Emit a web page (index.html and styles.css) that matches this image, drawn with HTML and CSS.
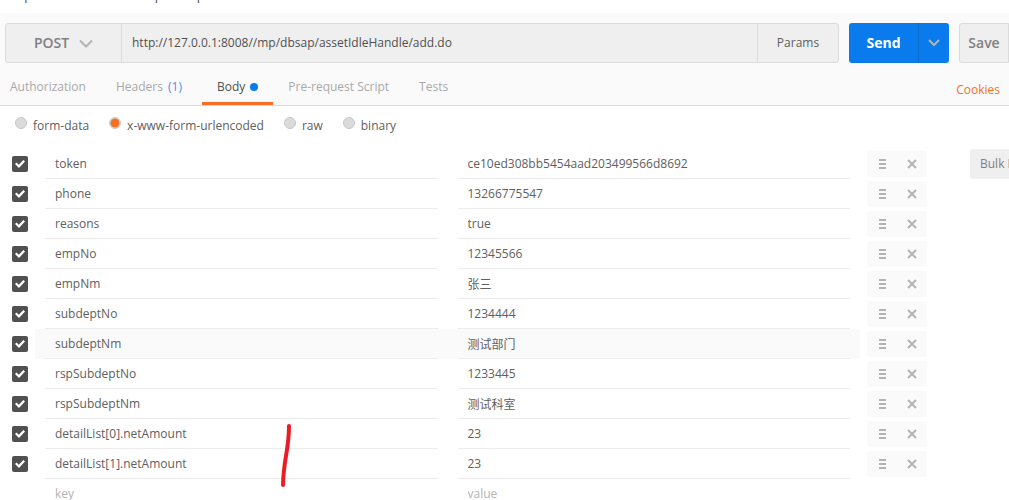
FILE: index.html
```html
<!DOCTYPE html>
<html lang="en">
<head>
<meta charset="utf-8">
<title>Request builder</title>
<link rel="stylesheet" href="styles.css">
</head>
<body>
<div class="title">http://127.0.0.1:8008//mp/dbsap/</div>
<header class="head">
  <div class="bar">
    <div class="request">
      <button class="method" type="button">POST
        <svg width="14" height="9" viewBox="0 0 14 9"><path d="M1 1.500 7 7.500 13 1.500"/></svg>
      </button>
      <input class="url" aria-label="Request URL" value="http://127.0.0.1:8008//mp/dbsap/assetIdleHandle/add.do">
      <button class="params" type="button">Params</button>
    </div>
    <div class="send">
      <button class="send-main" type="button">Send</button>
      <button class="send-more" type="button" aria-label="Send options">
        <svg width="12" height="8" viewBox="0 0 12 8"><path d="M1 1 6 6 11 1"/></svg>
      </button>
    </div>
    <button class="save" type="button">Save</button>
  </div>
  <nav class="tabs">
    <button class="tab" type="button">Authorization</button>
    <button class="tab" type="button">Headers <span class="count">(1)</span></button>
    <button class="tab active" type="button">Body<i class="dot"></i></button>
    <button class="tab" type="button">Pre-request Script</button>
    <button class="tab" type="button">Tests</button>
    <a class="cookies" href="#">Cookies</a>
  </nav>
</header>
<main>
  <div class="modes">
    <label class="mode"><input type="radio" name="mode">form-data</label>
    <label class="mode"><input type="radio" name="mode" checked>x-www-form-urlencoded</label>
    <label class="mode"><input type="radio" name="mode">raw</label>
    <label class="mode"><input type="radio" name="mode">binary</label>
  </div>
  <div class="editor">
    <table class="params-table">
      <colgroup><col class="c-check"><col><col><col class="c-act"></colgroup>
      <tbody id="rows"></tbody>
    </table>
    <button class="bulk" type="button">Bulk Edit</button>
    <svg class="mark" width="14" height="66" viewBox="0 0 14 66"><path d="M10 3C10 27 4.500 36 4 62"/></svg>
  </div>
</main>
<script src="rows.js"></script>
</body>
</html>
```
FILE: styles.css
```css
* { box-sizing: border-box; }
body {
  margin: 0;
  height: 100vh;
  overflow: hidden;
  background: #fff;
  color: #606060;
  font: 12px/18px "Open Sans", "Noto Sans CJK SC", sans-serif;
}
button, input { font: inherit; color: inherit; margin: 0; }
button { border: 0; background: none; padding: 0; white-space: nowrap; }
svg { fill: none; }

.title {
  height: 13px;
  padding: 0 0 8px 7px;
  font-size: 13px;
  line-height: 20px;
  display: flex;
  align-items: flex-end;
  overflow: hidden;
  color: #505050;
}
.head { background: #fafafa; border-bottom: 1px solid #dbdbdb; padding-top: 10px; }
.bar { display: flex; padding-left: 5px; }
.request {
  display: flex;
  flex: 1;
  height: 40px;
  border: 1px solid #dbdbdb;
  border-radius: 3px;
  background: #efefef;
}
.method {
  display: flex;
  align-items: center;
  justify-content: center;
  gap: 10px;
  width: 116px;
  border-right: 1px solid #dbdbdb;
  font-size: 14px;
  font-weight: 600;
  color: #808080;
}
.method svg { stroke: #b3b3b3; stroke-width: 2; }
.url { flex: 1; min-width: 0; border: 0; background: none; padding: 0 10px; outline: 0; color: #505050; }
.params { width: 81px; border-left: 1px solid #dbdbdb; }
.send {
  display: flex;
  width: 100px;
  margin: 0 10px;
  border-radius: 3px;
  background: #097bed;
  overflow: hidden;
}
.send-main { flex: 1; color: #fff; font-size: 14px; font-weight: 700; }
.send-more { width: 31px; border-left: 1px solid #0a6ccf; }
.send-more svg { stroke: #b3b3b3; stroke-width: 2; }
.save {
  width: 50px;
  border: 1px solid #dbdbdb;
  border-radius: 3px 0 0 3px;
  background: #efefef;
  color: #808080;
  font-size: 14px;
  font-weight: 600;
}

.tabs { display: flex; height: 42px; padding-top: 9px; }
.tab { padding: 0 15px; color: #a9a9a9; border-bottom: 3px solid transparent; }
.tab:first-child { padding-left: 10px; }
.tab.active { color: #505050; border-color: #f47023; }
.count { color: #4a90f0; margin: 0 5px 0 2px; }
.dot {
  display: inline-block;
  width: 8px;
  height: 8px;
  margin-left: 5px;
  border-radius: 50%;
  background: #097bed;
}
.cookies { margin: 9px 9px 0 auto; color: #f47023; text-decoration: none; }

.modes { display: flex; gap: 20px; padding: 11px 15px 14px; }
.mode { display: flex; gap: 6px; }
.mode input {
  appearance: none;
  width: 12px;
  height: 12px;
  border: 1px solid #c8c8c8;
  border-radius: 50%;
  background: #dbdbdb;
}
.mode input:checked { background: radial-gradient(circle, #f47023 4px, #dbdbdb 5px); }

.editor { position: relative; display: flex; align-items: flex-start; }
.params-table { flex: 1; min-width: 0; table-layout: fixed; border-collapse: collapse; }
.c-check { width: 35px; }
.c-act { width: 67px; }
td { padding: 0; height: 30px; }
.check-cell { padding-left: 12px; }
.check {
  appearance: none;
  display: grid;
  place-items: center;
  width: 16px;
  height: 16px;
  border-radius: 2px;
  background: #505050;
}
.check::before {
  content: "";
  width: 10px;
  height: 8px;
  background: #fff;
  clip-path: polygon(0 50%, 15% 31%, 38% 58%, 84% 0, 100% 18%, 40% 100%);
}
.cell { padding: 0 10px; }
.field {
  display: block;
  width: 100%;
  height: 30px;
  padding: 0 10px;
  border: 0;
  border-bottom: 1px solid #ececec;
  border-radius: 0;
  background: none;
  outline: 0;
}
.field::placeholder { color: #b3b3b3; opacity: 1; }
.hovered .cell { background: #fafafa; }
.actions {
  display: flex;
  align-items: center;
  justify-content: flex-end;
  gap: 21px;
  height: 26px;
  margin-left: 7px;
  padding-right: 10px;
  border-radius: 3px;
  background: #fafafa;
}
.actions button { display: flex; }
.actions svg { stroke: #b3b3b3; stroke-width: 2; }
.bulk {
  flex: none;
  width: 39px;
  height: 30px;
  margin-left: 43px;
  padding-left: 10px;
  overflow: hidden;
  text-align: left;
  border-radius: 3px 0 0 3px;
  background: #efefef;
  color: #808080;
}
.mark {
  position: absolute;
  left: 279px;
  top: 274px;
  stroke: #ed1c24;
  stroke-width: 4;
  stroke-linecap: round;
}
```
FILE: rows.js
```js
const rows = [
  ["token", "ce10ed308bb5454aad203499566d8692"],
  ["phone", "13266775547"],
  ["reasons", "true"],
  ["empNo", "12345566"],
  ["empNm", "张三"],
  ["subdeptNo", "1234444"],
  ["subdeptNm", "测试部门", true],
  ["rspSubdeptNo", "1233445"],
  ["rspSubdeptNm", "测试科室"],
  ["detailList[0].netAmount", "23"],
  ["detailList[1].netAmount", "23"]
];
const field = (label, value) =>
  `<td class="cell"><input class="field" aria-label="${label}" value="${value}"></td>`;
document.getElementById("rows").innerHTML = rows.map(([key, value, hovered]) => `
  <tr class="${hovered ? "hovered" : ""}">
    <td class="check-cell"><input class="check" type="checkbox" checked aria-label="Use ${key}"></td>
    ${field("Key", key)}${field("Value", value)}
    <td><div class="actions">
      <button type="button" aria-label="Reorder"><svg width="7" height="10" viewBox="0 0 7 10"><path d="M0 1H7M0 5H7M0 9H7"/></svg></button>
      <button type="button" aria-label="Delete"><svg width="10" height="10" viewBox="0 0 10 10"><path d="M1 1 9 9M9 1 1 9"/></svg></button>
    </div></td>
  </tr>`).join("") + `
  <tr><td></td>
    <td class="cell"><input class="field" aria-label="New key" placeholder="key"></td>
    <td class="cell"><input class="field" aria-label="New value" placeholder="value"></td>
    <td></td></tr>`;
```
